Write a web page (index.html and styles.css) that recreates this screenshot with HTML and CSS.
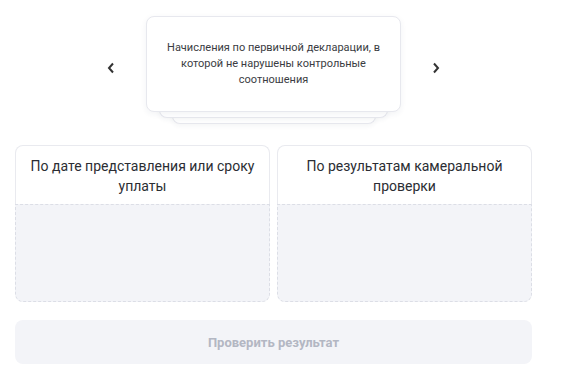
FILE: index.html
```html
<!DOCTYPE html>
<html lang="ru">
<head>
    <meta charset="UTF-8">
    <meta name="viewport" content="width=device-width, initial-scale=1.0">
    <title>Начисления</title>
    <link rel="stylesheet" href="styles.css">
</head>
<body>
    <!-- Карусель карточек -->
    <div class="carousel">
        <button class="arrow" type="button" aria-label="Назад">
            <svg width="8" height="12" viewBox="0 0 8 12"><path d="M6 1.5L2 6l4 4.5" fill="none" stroke="#333" stroke-width="2"/></svg>
        </button>
        <div class="deck">
            <div class="card">Начисления по первичной декларации, в которой не нарушены контрольные соотношения</div>
            <div class="layer layer-1"></div>
            <div class="layer layer-2"></div>
        </div>
        <button class="arrow" type="button" aria-label="Вперёд">
            <svg width="8" height="12" viewBox="0 0 8 12"><path d="M2 1.5L6 6l-4 4.5" fill="none" stroke="#333" stroke-width="2"/></svg>
        </button>
    </div>

    <!-- Корзины -->
    <div class="bins">
        <div class="bin">
            <div class="bin-title">По дате представления или сроку уплаты</div>
            <div class="bin-drop"></div>
        </div>
        <div class="bin">
            <div class="bin-title">По результатам камеральной проверки</div>
            <div class="bin-drop"></div>
        </div>
    </div>

    <button class="check" type="button" disabled>Проверить результат</button>
</body>
</html>
```

FILE: styles.css
```css
/* Общие стили */
body {
    margin: 0;
    padding: 16px 40px 10px 15px;
    font-family: Roboto, "Liberation Sans", sans-serif;
    color: #2b2d33;
    background-color: #fff;
}

.carousel {
    display: flex;
    justify-content: center;
    align-items: flex-start;
    gap: 27px;
    height: 129px;
}

.arrow {
    margin-top: 44px;
    width: 16px;
    height: 16px;
    padding: 0;
    border: none;
    background: none;
    display: flex;
    align-items: center;
    justify-content: center;
    cursor: pointer;
}

.deck {
    display: flex;
    flex-direction: column;
    align-items: center;
}

.card {
    width: 255px;
    box-sizing: border-box;
    height: 96px;
    padding: 23px 12px 0;
    border: 1px solid #e7e8ee;
    border-radius: 8px;
    background-color: #fff;
    box-shadow: 0 2px 6px rgba(40, 50, 80, 0.06);
    font-size: 11px;
    line-height: 16px;
    text-align: center;
    color: #3a3c42;
    position: relative;
    z-index: 3;
}

.layer {
    box-sizing: border-box;
    height: 12px;
    margin-top: -6px;
    border: 1px solid #e7e8ee;
    border-top: none;
    border-radius: 0 0 8px 8px;
    background-color: #fff;
    box-shadow: 0 2px 5px rgba(40, 50, 80, 0.05);
}

.layer-1 {
    width: 229px;
    position: relative;
    z-index: 2;
}

.layer-2 {
    width: 204px;
    position: relative;
    z-index: 1;
}

.bins {
    display: grid;
    grid-template-columns: 1fr 1fr;
    gap: 7px;
}

.bin {
    height: 157px;
    display: flex;
    flex-direction: column;
}

.bin-title {
    height: 59px;
    box-sizing: border-box;
    padding: 10px 6px 0;
    font-size: 14px;
    line-height: 20px;
    text-align: center;
    color: #2b2d33;
    border: 1px solid #e9eaef;
    border-bottom: none;
    border-radius: 8px 8px 0 0;
}

.bin-drop {
    flex: 1;
    background-color: #f3f4f8;
    border: 1px dashed #dcdee6;
    border-radius: 0 0 8px 8px;
}

.check {
    display: block;
    width: 100%;
    height: 44px;
    margin-top: 18px;
    border: none;
    border-radius: 8px;
    background-color: #f3f4f8;
    font-family: Roboto, "Liberation Sans", sans-serif;
    font-size: 13px;
    font-weight: bold;
    color: #b3b7c3;
}
```
